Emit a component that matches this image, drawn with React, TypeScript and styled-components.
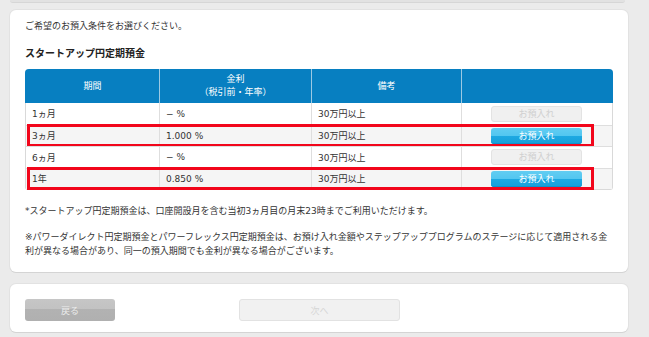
import React from "react";
import styled, { createGlobalStyle, css } from "styled-components";

const Global = createGlobalStyle`
  html, body { margin: 0; padding: 0; }
  body {
    background: #ebebeb;
    font-family: "DejaVu Sans", "Noto Sans CJK JP", sans-serif;
    font-size: 9px;
    color: #333;
  }
  * { box-sizing: border-box; }
`;

const Page = styled.div`
  width: 649px;
  height: 337px;
  overflow: hidden;
  display: flex;
  flex-direction: column;
`;

const PrevEdge = styled.div`
  height: 3px;
  margin: 0 24px 0 10px;
  background: #e2e2e2;
  border-bottom: 1px solid #d6d6d6;
  border-radius: 0 0 4px 4px;
`;

const Card = styled.section<{ $pad: string; $mt: number }>`
  margin: ${(p) => p.$mt}px 21px 0 10px;
  background: #fff;
  border-radius: 6px;
  box-shadow: 0 1px 0 #d4d4d4, 0 0 0 1px #e2e2e2;
  padding: ${(p) => p.$pad};
`;

const Intro = styled.p`
  margin: 0;
  line-height: 13px;
  font-size: 9px;
  color: #333;
`;

const Title = styled.h2`
  margin: 14px 0 0;
  font-size: 10px;
  line-height: 14px;
  font-weight: bold;
  color: #222;
`;

const Table = styled.div`
  margin-top: 8px;
  width: 588px;
  border: 1px solid #d9d9d9;
  border-top: none;
  border-radius: 4px 4px 3px 3px;
`;

const HeadRow = styled.div`
  display: grid;
  grid-template-columns: 134px 152px 150px 150px;
  height: 34px;
  background: #077fc1;
  border-radius: 4px 4px 0 0;
  margin: 0 -1px;
  padding: 0 1px;
`;

const HeadCell = styled.div<{ $last?: boolean }>`
  display: flex;
  flex-direction: column;
  align-items: center;
  justify-content: center;
  color: #fff;
  font-size: 9px;
  line-height: 13px;
  border-right: ${(p) => (p.$last ? "none" : "1px solid #9cc9e3")};
`;

const Row = styled.div<{ $alt?: boolean; $mark?: boolean }>`
  position: relative;
  display: grid;
  grid-template-columns: 134px 152px 150px 150px;
  height: 21.5px;
  border-top: 1px solid #dedede;
  background: ${(p) => (p.$alt ? "#f5f5f5" : "#fff")};
  &:first-of-type { border-top: none; }
  ${(p) =>
    p.$mark &&
    css`
      &::after {
        content: "";
        position: absolute;
        left: 1px;
        right: 18px;
        top: -2px;
        bottom: -1px;
        border: 3px solid #f2061b;
        pointer-events: none;
      }
    `}
`;

const Cell = styled.div<{ $last?: boolean }>`
  display: flex;
  align-items: center;
  padding-left: ${(p) => (p.$last ? "29px" : "6px")};
  border-right: ${(p) => (p.$last ? "none" : "1px solid #dedede")};
  color: #333;
  font-size: 9px;
  white-space: nowrap;
`;

const Body = styled.div``;

const DepositButton = styled.button<{ $on?: boolean }>`
  width: 91px;
  height: 16px;
  padding: 0;
  border-radius: 3px;
  font-family: inherit;
  font-size: 9px;
  line-height: 14px;
  cursor: pointer;
  ${(p) =>
    p.$on
      ? css`
          border: none;
          color: #fff;
          background: linear-gradient(#62cdf2 0%, #52c6f0 50%, #1ea9e2 50%, #169fd9 100%);
          box-shadow: inset 0 -1px 0 #1192cc;
        `
      : css`
          border: 1px solid #e3e3e3;
          color: #cfcfcf;
          background: #f0f0f0;
        `}
`;

const Note = styled.p<{ $mt: number }>`
  margin: ${(p) => p.$mt}px 0 0;
  font-size: 9px;
  line-height: 14px;
  color: #333;
  width: 600px;
`;

const Actions = styled.div`
  display: flex;
  align-items: center;
  gap: 124px;
`;

const NavButton = styled.button<{ $variant: "back" | "next" }>`
  height: 22px;
  padding: 0;
  border-radius: 3px;
  font-family: inherit;
  font-size: 9px;
  ${(p) =>
    p.$variant === "back"
      ? css`
          width: 90px;
          border: none;
          color: #ececec;
          background: linear-gradient(#c6c6c6 0%, #c2c2c2 45%, #b2b2b2 45%, #b0b0b0 100%);
        `
      : css`
          width: 161px;
          border: 1px solid #e2e2e2;
          color: #d6d6d6;
          background: #f1f1f1;
        `}
`;

type RowData = { term: string; rate: string; note: string; on: boolean };

const rows: RowData[] = [
  { term: "1ヵ月", rate: "− %", note: "30万円以上", on: false },
  { term: "3ヵ月", rate: "1.000 %", note: "30万円以上", on: true },
  { term: "6ヵ月", rate: "− %", note: "30万円以上", on: false },
  { term: "1年", rate: "0.850 %", note: "30万円以上", on: true },
];

export default function App() {
  return (
    <>
      <Global />
      <Page>
        <PrevEdge />
        <Card $mt={7} $pad="10px 15px 14px">
          <Intro>ご希望のお預入条件をお選びください。</Intro>
          <Title>スタートアップ円定期預金</Title>
          <Table>
            <HeadRow>
              <HeadCell>期間</HeadCell>
              <HeadCell>
                <span>金利</span>
                <span>（税引前・年率）</span>
              </HeadCell>
              <HeadCell>備考</HeadCell>
              <HeadCell $last />
            </HeadRow>
            <Body>
              {rows.map((r, i) => (
                <Row key={r.term} $alt={i % 2 === 1} $mark={r.on}>
                  <Cell>{r.term}</Cell>
                  <Cell>{r.rate}</Cell>
                  <Cell>{r.note}</Cell>
                  <Cell $last>
                    <DepositButton $on={r.on} disabled={!r.on}>
                      お預入れ
                    </DepositButton>
                  </Cell>
                </Row>
              ))}
            </Body>
          </Table>
          <Note $mt={14}>
            *スタートアップ円定期預金は、口座開設月を含む当初3ヵ月目の月末23時までご利用いただけます。
          </Note>
          <Note $mt={12}>
            ※パワーダイレクト円定期預金とパワーフレックス円定期預金は、お預け入れ金額やステップアッププログラムのステージに応じて適用される金
            <br />
            利が異なる場合があり、同一の預入期間でも金利が異なる場合がございます。
          </Note>
        </Card>
        <Card $mt={12} $pad="15px 15px 11px">
          <Actions>
            <NavButton $variant="back">戻る</NavButton>
            <NavButton $variant="next" disabled>
              次へ
            </NavButton>
          </Actions>
        </Card>
      </Page>
    </>
  );
}
